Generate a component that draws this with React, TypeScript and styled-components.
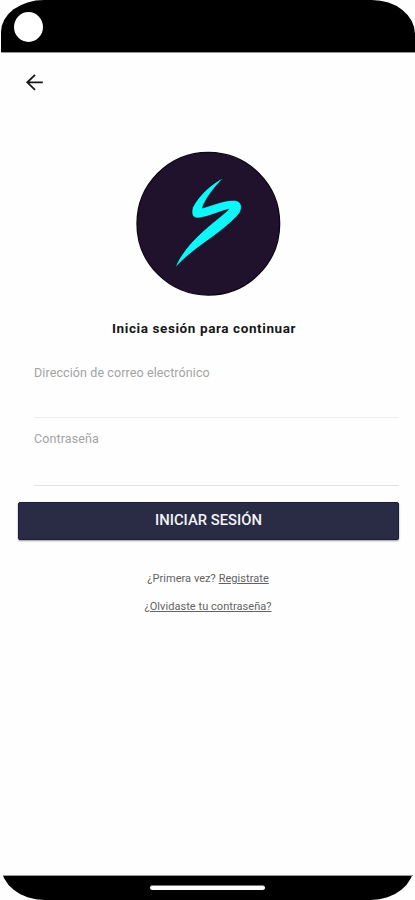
import React from "react";
import styled, { createGlobalStyle } from "styled-components";

const GlobalStyle = createGlobalStyle`
  *, *::before, *::after { box-sizing: border-box; }
  body { margin: 0; background: #fff; font-family: Roboto, sans-serif; }
`;

const Screen = styled.main`
  width: 415px;
  height: 900px;
  display: flex;
  flex-direction: column;
  background: #fefefe;
  overflow: hidden;
`;

const StatusBar = styled.header`
  flex: none;
  height: 53px;
  margin: 0 0 0 1px;
  padding: 12px 0 0 13px;
  background: #000;
  border-bottom: 1px solid #989494;
  border-radius: 43px 43px 0 0 / 32px 34px 0 0;
`;

const Camera = styled.div`
  width: 29px;
  height: 30px;
  border-radius: 50%;
  background: #fff;
`;

const Toolbar = styled.nav`
  flex: none;
  height: 92px;
  padding: 20px 0 0 25px;
`;

const BackButton = styled.button`
  display: block;
  width: 19px;
  height: 19px;
  padding: 0;
  border: 0;
  background: none;
  svg { display: block; }
`;

const Logo = styled.svg`
  display: block;
  flex: none;
  width: 160px;
  height: 160px;
  margin-left: 130px;
`;

const Title = styled.h1`
  margin: 13px 0 0 112px;
  height: 20px;
  font-size: 13.5px;
  line-height: 20px;
  font-weight: 700;
  letter-spacing: 0.6px;
  white-space: nowrap;
  color: #161616;
`;

const Form = styled.form`
  display: flex;
  flex-direction: column;
  padding: 24px 16px 0 17px;
`;

const Field = styled.label<{ $tone: string; $height: number; $top: number }>`
  display: block;
  height: ${(p) => p.$height}px;
  margin-left: 17px;
  padding-top: ${(p) => p.$top}px;
  border-bottom: 1px solid ${(p) => p.$tone};
`;

const Label = styled.span`
  display: block;
  font-size: 12.5px;
  line-height: 16px;
  letter-spacing: 0.1px;
  color: #a3a3a3;
`;

const Input = styled.input`
  display: block;
  width: 100%;
  height: 26px;
  padding: 0;
  border: 0;
  outline: 0;
  background: transparent;
`;

const SubmitButton = styled.button`
  height: 38px;
  margin: 16px 0 0 1px;
  padding: 0 0 2px;
  border: 1px solid #1c1c3c;
  border-radius: 2px;
  background: #2a2b45;
  box-shadow: 0 1px 2px rgba(0, 0, 0, 0.4);
  color: #f4f4f8;
  font: 500 14.8px/34px Roboto, sans-serif;
`;

const Links = styled.section`
  flex: 1;
  display: flex;
  flex-direction: column;
  align-items: center;
  gap: 12px;
  padding: 31px 0 0 1px;
`;

const LinkLine = styled.p`
  margin: 0;
  font-size: 11px;
  line-height: 16px;
  letter-spacing: 0.05px;
  color: #626262;
`;

const TextLink = styled.a`
  color: inherit;
  text-decoration: underline;
  text-underline-offset: 1px;
`;

const Footer = styled.footer`
  flex: none;
  display: flex;
  align-items: flex-end;
  height: 25px;
  border-top: 1px solid #999;
  margin: 0 2px 0 3px;
  overflow: hidden;
`;

const GestureBar = styled.div`
  flex: none;
  display: flex;
  justify-content: center;
  width: calc(100% + 3px);
  height: 40px;
  margin: 0 -1px 0 -2px;
  padding-top: 25px;
  border-radius: 0 0 43px 43px / 0 0 35px 35px;
  background: #000;
`;

const GesturePill = styled.div`
  width: 115px;
  height: 5px;
  border-radius: 3px;
  background: #fff;
  border-top: 1px solid #777;
`;

export default function App() {
  return (
    <>
      <GlobalStyle />
      <Screen>
        <StatusBar>
          <Camera />
        </StatusBar>
        <Toolbar>
          <BackButton aria-label="Volver">
            <svg width="19" height="19" viewBox="0 0 19 19" fill="none" stroke="#161616" strokeWidth="1.8">
              <path d="M17.8 9.3H2.5M10 1.8L2.3 9.3L10 16.8" />
            </svg>
          </BackButton>
        </Toolbar>
        <Logo viewBox="0 0 480 480" aria-hidden="true">
          <circle cx="235" cy="236" r="214" fill="#20122d" stroke="#0c0713" strokeWidth="4" />
          <path
            d="M281 98C250 112 205 151 188 187C182 208 188 221 207 219C237 216 265 200 296 193C278 211 245 234 211 266C178 297 151 329 135 368C161 341 190 317 221 295C265 264 310 229 329 204C339 187 335 168 314 166C284 164 251 180 217 189C227 159 254 126 281 98Z"
            fill="#0ff5fa"
            stroke="#05070d"
            strokeWidth="2"
          />
        </Logo>
        <Title>Inicia sesión para continuar</Title>
        <Form>
          <Field $tone="#ededed" $height={56} $top={3}>
            <Label>Dirección de correo electrónico</Label>
            <Input type="email" />
          </Field>
          <Field $tone="#e2e2e2" $height={68} $top={13}>
            <Label>Contraseña</Label>
            <Input type="password" />
          </Field>
          <SubmitButton type="button">INICIAR SESIÓN</SubmitButton>
        </Form>
        <Links>
          <LinkLine>
            ¿Primera vez? <TextLink>Registrate</TextLink>
          </LinkLine>
          <LinkLine>
            <TextLink>¿Olvidaste tu contraseña?</TextLink>
          </LinkLine>
        </Links>
        <Footer>
          <GestureBar>
            <GesturePill />
          </GestureBar>
        </Footer>
      </Screen>
    </>
  );
}
